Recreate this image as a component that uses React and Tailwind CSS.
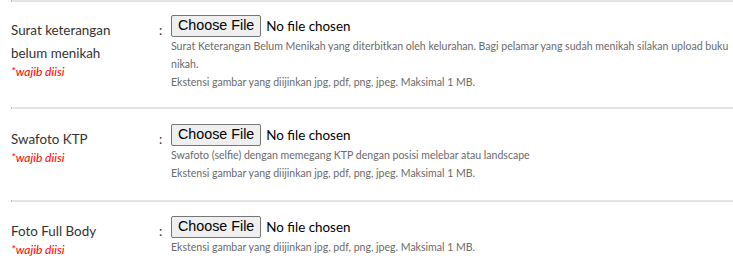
import React from "react";

function FileInput() {
  return (
    <div className="flex items-center h-[22px]">
      <span className="h-[22px] px-[6px] flex items-center border border-[#767676] rounded-[2px] bg-[#efefef] text-black text-[14.3px] font-['Liberation_Sans',Arial,sans-serif]">
        Choose File
      </span>
      <span className="ml-[5px] text-[13.4px] text-black font-['Lato',sans-serif]">No file chosen</span>
    </div>
  );
}

function Row({ label, descs, pt, pb }) {
  return (
    <div className={`flex ${pt} ${pb}`}>
      <div className="w-[148px] shrink-0 pt-[4px]">
        <div className="text-[13.4px] leading-[23px] text-[#333] w-[120px]">{label}</div>
        <div className="text-[12px] leading-[14px] italic text-[#ff0000]">*wajib diisi</div>
      </div>
      <div className="w-[12px] shrink-0 text-[13px] leading-[23px] text-[#333] pt-[4px]">:</div>
      <div className="flex-1 min-w-0">
        <FileInput />
        <div className="text-[10.55px] leading-[18px] text-[#6a6a6a] pr-[2px]">
          {descs.map((d, i) => (
            <div key={i}>{d}</div>
          ))}
        </div>
      </div>
    </div>
  );
}

function Hr() {
  return <div className="h-[2px] bg-[#e4e4e4] border-l border-[#bdbdbd]" />;
}

export default function App() {
  const ext = "Ekstensi gambar yang diijinkan jpg, pdf, png, jpeg. Maksimal 1 MB.";
  return (
    <div className="pl-[11px] bg-white w-[733px] h-[262px] overflow-hidden font-['Lato',sans-serif]">
      <Hr />
      <Row
        pt="pt-[13px]"
        pb="pb-[16px]"
        label="Surat keterangan belum menikah"
        descs={[
          "Surat Keterangan Belum Menikah yang diterbitkan oleh kelurahan. Bagi pelamar yang sudah menikah silakan upload buku nikah.",
          ext,
        ]}
      />
      <Hr />
      <Row
        pt="pt-[15px]"
        pb="pb-[18px]"
        label="Swafoto KTP"
        descs={["Swafoto (selfie) dengan memegang KTP dengan posisi melebar atau landscape", ext]}
      />
      <Hr />
      <Row pt="pt-[14px]" pb="pb-[16px]" label="Foto Full Body" descs={[ext]} />
    </div>
  );
}
